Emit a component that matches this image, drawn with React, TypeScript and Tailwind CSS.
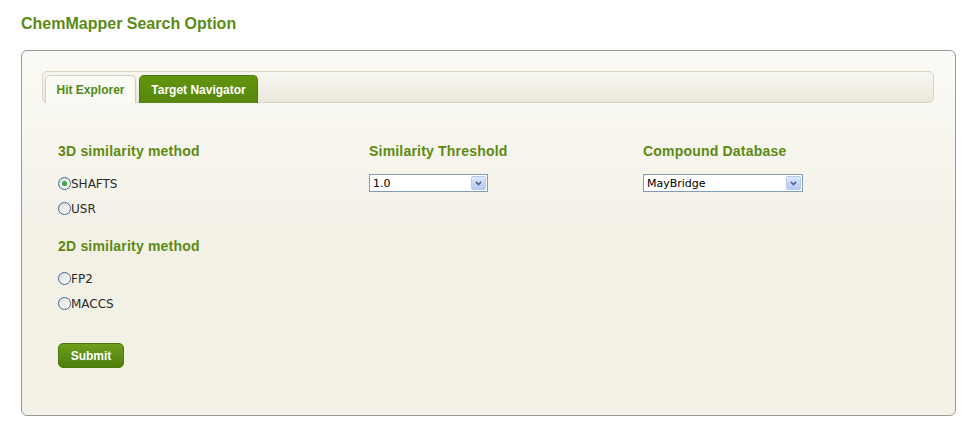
import React from "react";

const green = "text-[#5b8a14]";

function Radio({ label, checked }: { label: string; checked?: boolean }) {
  return (
    <label className="flex h-[25px] items-center">
      <span className="relative flex h-[13px] w-[13px] items-center justify-center rounded-full border border-[#3d6a9a] bg-gradient-to-br from-[#dcdcd6] to-[#ffffff]">
        {checked && <span className="h-[5px] w-[5px] rounded-full bg-[#3aa53a]" />}
      </span>
      <span className="text-[12px] leading-none text-[#2a2a2a] [font-family:'DejaVu_Sans',Verdana,sans-serif]">{label}</span>
    </label>
  );
}

function Select({ value, width }: { value: string; width: string }) {
  return (
    <div className={`relative flex h-[18px] items-center border border-[#7f9db9] bg-white ${width}`}>
      <span className="pl-[3px] text-[11px] leading-none text-black [font-family:'DejaVu_Sans',Verdana,sans-serif]">{value}</span>
      <span className="absolute right-[1px] top-[1px] flex h-[14px] w-[15px] items-center justify-center rounded-[2px] border border-[#b6c8ef] bg-gradient-to-b from-[#dfe8fd] to-[#b4c9f6]">
        <svg width="7" height="5" viewBox="0 0 7 5">
          <path d="M0.8 0.8 L3.5 3.5 L6.2 0.8" fill="none" stroke="#4d6185" strokeWidth="1.6" />
        </svg>
      </span>
    </div>
  );
}

export default function App() {
  return (
    <div className="min-h-[443px] bg-white px-[21px] pt-[14px] [font-family:'Liberation_Sans',Arial,sans-serif]">
      <h1 className={`text-[16px] font-bold leading-[20px] ${green}`}>ChemMapper Search Option</h1>
      <div className="mt-[16px] h-[366px] w-[935px] rounded-[6px] border border-[#999] bg-gradient-to-b from-[#fbfaf6] via-[#f3f1e6] to-[#f3f1e6] px-[20px] pt-[20px]">
        <div className="flex h-[32px] w-[892px] items-end gap-[3px] rounded-[5px] border border-[#d9d5c3] bg-gradient-to-b from-[#f7f6f1] to-[#ebe8da] pl-[2px]">
          <div className="-mb-px flex h-[28px] w-[91px] items-center justify-center rounded-t-[5px] border border-b-0 border-[#d3cfbd] bg-[#fbfbf6] text-[12px] font-bold text-[#4f8a14]">
            Hit Explorer
          </div>
          <div className="-mb-px flex h-[28px] w-[119px] items-center justify-center rounded-t-[5px] border border-b-0 border-[#4e7a0c] bg-gradient-to-b from-[#62940f] to-[#56870c] text-[12px] font-bold text-white">
            Target Navigator
          </div>
        </div>
        <div className="flex pl-[16px] pt-[40px]">
          <div className="w-[311px]">
            <h2 className={`text-[14px] font-bold leading-[16px] tracking-[0.2px] ${green}`}>3D similarity method</h2>
            <div className="mt-[12px]">
              <Radio label="SHAFTS" checked />
              <Radio label="USR" />
            </div>
            <h2 className={`mt-[17px] text-[14px] font-bold leading-[16px] tracking-[0.2px] ${green}`}>2D similarity method</h2>
            <div className="mt-[12px]">
              <Radio label="FP2" />
              <Radio label="MACCS" />
            </div>
            <button className="mt-[27px] flex h-[25px] w-[66px] items-center justify-center rounded-[5px] border border-[#4a780b] bg-gradient-to-b from-[#6d9e1d] to-[#4e7f0b] text-[12px] font-bold text-white">
              Submit
            </button>
          </div>
          <div className="w-[274px]">
            <h2 className={`text-[14px] font-bold leading-[16px] tracking-[0.2px] ${green}`}>Similarity Threshold</h2>
            <div className="mt-[15px]">
              <Select value="1.0" width="w-[119px]" />
            </div>
          </div>
          <div>
            <h2 className={`text-[14px] font-bold leading-[16px] tracking-[0.2px] ${green}`}>Compound Database</h2>
            <div className="mt-[15px]">
              <Select value="MayBridge" width="w-[160px]" />
            </div>
          </div>
        </div>
      </div>
    </div>
  );
}
